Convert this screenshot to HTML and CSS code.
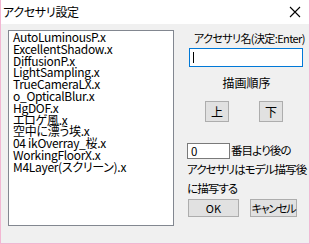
FILE: index.html
```html
<!DOCTYPE html>
<html lang="ja">
<head>
    <meta charset="UTF-8">
    <title>アクセサリ設定</title>
    <link rel="stylesheet" href="styles.css">
</head>
<body>
    <div class="window">
        <div class="titlebar">
            <span class="title">アクセサリ設定</span>
            <svg class="close" width="12" height="12" viewBox="0 0 12 12">
                <path d="M1 1 L11 11 M11 1 L1 11" stroke="#000" stroke-width="1.1" fill="none"/>
            </svg>
        </div>
        <div class="content">
            <ul class="listbox">
                <li>AutoLuminousP.x</li>
                <li>ExcellentShadow.x</li>
                <li>DiffusionP.x</li>
                <li>LightSampling.x</li>
                <li>TrueCameraLX.x</li>
                <li>o_OpticalBlur.x</li>
                <li>HgDOF.x</li>
                <li>エロゲ風.x</li>
                <li>空中に漂う埃.x</li>
                <li>04 ikOverray_桜.x</li>
                <li>WorkingFloorX.x</li>
                <li>M4Layer(スクリーン).x</li>
            </ul>
            <div class="panel">
                <div class="label">アクセサリ名(決定:Enter)</div>
                <div class="name-input"><span class="caret"></span></div>
                <div class="heading">描画順序</div>
                <div class="order-buttons">
                    <button class="btn btn-small">上</button>
                    <button class="btn btn-small">下</button>
                </div>
                <p class="after-text"><span class="num-input">0</span>番目より後の<br>アクセサリはモデル描写後<br>に描写する</p>
                <div class="dialog-buttons">
                    <button class="btn btn-ok">OK</button>
                    <button class="btn btn-cancel">キャンセル</button>
                </div>
            </div>
        </div>
    </div>
</body>
</html>
```

FILE: styles.css
```css
body {
    margin: 0;
    padding: 0;
    background: #f0f0f0;
    font-family: "Noto Sans CJK JP", sans-serif;
    font-size: 12px;
    font-feature-settings: "palt";
    color: #000;
}
.window {
    width: 310px;
    height: 244px;
    box-sizing: border-box;
    border: 1px solid #f2b6d2;
    border-top: none;
    background: #f0f0f0;
}
.titlebar {
    height: 24px;
    background: #fff;
    display: flex;
    align-items: center;
    justify-content: space-between;
    padding: 0 8px 0 2px;
}
.title {
    font-size: 12px;
    line-height: 14px;
    letter-spacing: -0.3px;
}
.close {
    display: block;
}
.content {
    display: flex;
    align-items: flex-start;
    padding: 6px 0 0 7px;
}
.listbox {
    list-style: none;
    margin: 0;
    width: 166px;
    height: 196px;
    box-sizing: border-box;
    padding: 0 0 0 4px;
    background: #fff;
    border: 1px solid #828790;
    font-size: 12px;
    line-height: 11.8px;
}
.listbox li {
    white-space: nowrap;
    letter-spacing: -0.3px;
}
.panel {
    width: 116px;
    margin-left: 13px;
    display: flex;
    flex-direction: column;
    font-size: 11px;
}
.label {
    margin-top: 1px;
    line-height: 14px;
    padding-left: 7px;
    white-space: nowrap;
    letter-spacing: -0.6px;
}
.name-input {
    margin: 3px 0 0 2px;
    width: 114px;
    height: 19px;
    box-sizing: border-box;
    border: 1px solid #0078d7;
    background: #fff;
    padding: 3px 0 0 3px;
}
.caret {
    display: block;
    width: 1px;
    height: 11px;
    background: #000;
}
.heading {
    margin-top: 9px;
    line-height: 14px;
    font-size: 12px;
    text-align: center;
    padding-left: 3px;
}
.order-buttons {
    margin-top: 11px;
    display: flex;
    gap: 30px;
    padding-left: 18px;
}
.btn {
    font-family: inherit;
    font-size: 12px;
    font-feature-settings: "palt";
    background: #e1e1e1;
    border: 1px solid #adadad;
    padding: 0;
    margin: 0;
    color: #000;
    line-height: 14px;
    white-space: nowrap;
}
.btn-small {
    width: 24px;
    height: 21px;
}
.after-text {
    margin: 19px 0 0 0;
    line-height: 19px;
    font-size: 11.5px;
    white-space: nowrap;
    letter-spacing: -0.9px;
}
.num-input {
    display: inline-block;
    vertical-align: top;
    margin-top: 2px;
    margin-right: 1px;
    width: 43px;
    height: 16px;
    box-sizing: border-box;
    border: 1px solid #7a7a7a;
    background: #fff;
    line-height: 14px;
    padding-left: 3px;
    letter-spacing: 0;
}
.dialog-buttons {
    margin-top: 1px;
    display: flex;
    gap: 11px;
    padding-left: 1px;
}
.btn-ok {
    width: 51px;
    height: 18px;
    font-size: 11px;
}
.btn-cancel {
    width: 47px;
    height: 18px;
    font-size: 11px;
    letter-spacing: -1.2px;
}
```
